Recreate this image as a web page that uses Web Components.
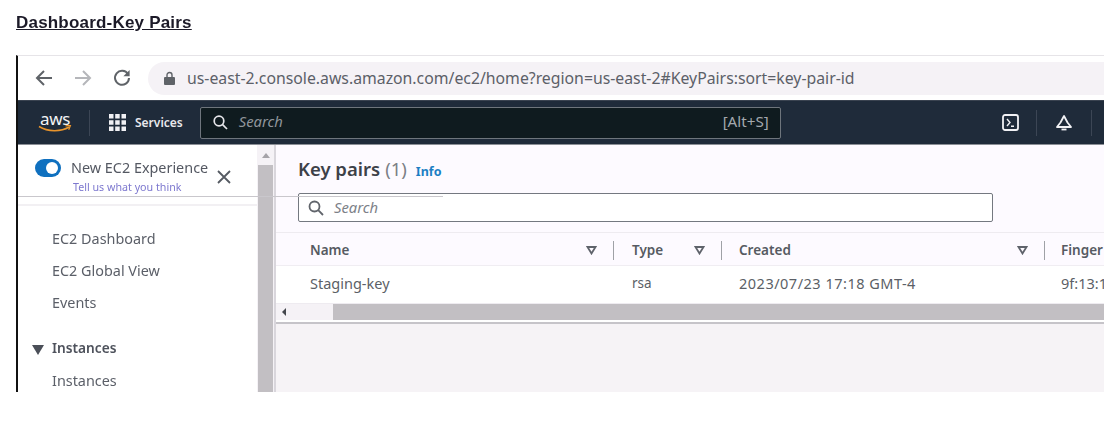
<!DOCTYPE html>
<html>
<head>
<meta charset="utf-8">
<title>Dashboard-Key Pairs</title>
<style>
  html, body { margin: 0; padding: 0; background: #fff; }
  body { width: 1104px; height: 441px; overflow: hidden; font-family: "Noto Sans", sans-serif; color: #414750; }
  .frame { display: flex; flex-direction: column; width: 1088px; height: 337px; margin-left: 16px; border-left: 2px solid #111; border-top: 1px solid #e6e4e8; box-sizing: border-box; overflow: hidden; filter: blur(.35px); }
  .console { display: flex; flex: 1; min-height: 0; position: relative; }
</style>
</head>
<body>
<page-title>Dashboard-Key Pairs</page-title>
<div class="frame">
  <browser-bar url="us-east-2.console.aws.amazon.com/ec2/home?region=us-east-2#KeyPairs:sort=key-pair-id"></browser-bar>
  <aws-nav></aws-nav>
  <div class="console">
    <ec2-sidebar></ec2-sidebar>
    <v-scroll></v-scroll>
    <keypairs-panel></keypairs-panel>
    <hair-line></hair-line>
  </div>
</div>
<script>
customElements.define('page-title', class extends HTMLElement {
  connectedCallback() {
    this.attachShadow({ mode: 'open' });
    this.shadowRoot.innerHTML = `
      <style>
        :host { display:block; height:55px; box-sizing:border-box; padding:13px 0 0 16px }
        h1 { margin:0; font:700 17px/20px "Liberation Sans", Arial, sans-serif; color:#1c1a28; text-decoration:underline; letter-spacing:.2px; filter:blur(.35px) }
      </style>
      <h1><slot></slot></h1>`;
  }
});

customElements.define('browser-bar', class extends HTMLElement {
  connectedCallback() {
    this.attachShadow({ mode: 'open' });
    const url = this.getAttribute('url');
    this.shadowRoot.innerHTML = `
      <style>
        :host { display:flex; align-items:center; height:45px; box-sizing:border-box; padding:0 0 0 17px; background:#fff; border-bottom:1px solid #3a4350; }
        svg { display:block; flex:none }
        .btn { margin-right:21px }
        .pill { flex:1; height:33px; margin-left:17px; display:flex; align-items:center; gap:12px; padding-left:16px; background:#f5f2f6; border-radius:17px 0 0 17px; color:#5c6068; font-size:15.8px; white-space:nowrap; }
      </style>
      <svg class="btn" width="18" height="18" viewBox="0 0 18 18" fill="none" stroke="#5f6368" stroke-width="2"><path d="M17 9H2M9 2 2 9l7 7"/></svg>
      <svg class="btn" width="18" height="18" viewBox="0 0 18 18" fill="none" stroke="#b5b6ba" stroke-width="2"><path d="M1 9h15M9 2l7 7-7 7"/></svg>
      <svg width="18" height="18" viewBox="0 0 18 18" fill="none" stroke="#5f6368" stroke-width="2"><path d="M15 5.200A7 7 0 1 0 16 9"/><path d="M16.600 1v6.200h-6.200z" fill="#5f6368" stroke="none"/></svg>
      <div class="pill">
        <svg width="11" height="14" viewBox="0 0 11 14"><path d="M1 6h9a1 1 0 0 1 1 1v6a1 1 0 0 1-1 1H1a1 1 0 0 1-1-1V7a1 1 0 0 1 1-1z" fill="#5f6368"/><path d="M3 6.500V4a2.500 2.500 0 0 1 5 0v2.500" fill="none" stroke="#5f6368" stroke-width="1.400"/></svg>
        <span>${url}</span>
      </div>`;
  }
});

customElements.define('aws-nav', class extends HTMLElement {
  connectedCallback() {
    this.attachShadow({ mode: 'open' });
    this.shadowRoot.innerHTML = `
      <style>
        :host { display:flex; align-items:center; height:44px; box-sizing:border-box; background:#1f2b3a; color:#e8e8ec; border-bottom:1px solid #8b8f96; padding-left:20px; }
        svg { display:block; flex:none }
        .logo { width:34px; margin-right:17px }
        .logo b { display:block; font:400 17px/13px "Noto Sans", sans-serif; letter-spacing:-.3px; color:#f3f3f5; text-align:center }
        .sep { width:1px; height:26px; background:#3c4655; flex:none }
        .services { margin:0 17px 0 9px; font-size:12px; font-weight:600 }
        .grid { margin-left:19px }
        .search { width:581px; height:32px; box-sizing:border-box; display:flex; align-items:center; background:#0f1b1f; border:1px solid #6e757c; border-radius:2px; padding:0 11px 0 12px; color:#8f959b; font-size:14.800px }
        .search i { margin:-4px 0 0 11px; flex:1 }
        .search span { margin-top:-4px; font-size:15.200px; color:#a3a8ad }
        .term { margin-left:221px }
      </style>
      <div class="logo">
        <b>aws</b>
        <svg width="34" height="8" viewBox="0 0 34 8" fill="none"><path d="M1 1.500c9 5.500 22 5.500 30 .5" stroke="#e8942c" stroke-width="1.600"/><path d="M27.500 .8l5-.5-1.800 4.400" stroke="#e8942c" stroke-width="1.300"/></svg>
      </div>
      <div class="sep"></div>
      <svg class="grid" width="17" height="17" viewBox="0 0 17 17" fill="#f1f1f4"><path d="M0 0h4.500v4.500H0zM6.200 0h4.500v4.500H6.200zM12.500 0H17v4.500h-4.500zM0 6.200h4.500v4.500H0zM6.200 6.200h4.500v4.500H6.200zM12.500 6.200H17v4.500h-4.500zM0 12.500h4.500V17H0zM6.200 12.500h4.500V17H6.200zM12.500 12.500H17V17h-4.500z"/></svg>
      <span class="services">Services</span>
      <div class="search">
        <svg width="15" height="15" viewBox="0 0 15 15" fill="none" stroke="#e6e6ea" stroke-width="1.700"><circle cx="6" cy="6" r="4.800"/><path d="M9.600 9.600 14 14"/></svg>
        <i>Search</i><span>[Alt+S]</span>
      </div>
      <svg class="term" width="17" height="17" viewBox="0 0 17 17" fill="none" stroke="#f1f1f4"><rect x="1" y="1" width="15" height="15" rx="2" stroke-width="1.800"/><path d="M5 5l3 3.500-3 3.500M9 12.300h3" stroke-width="1.400"/></svg>
      <div class="sep" style="margin-left:17px"></div>
      <svg style="margin-left:18px" width="18" height="18" viewBox="0 0 18 18" fill="#1f2b3a" stroke="#f1f1f4" stroke-width="1.800"><path d="M9 2 5.500 8.500 2 13h14l-3.500-4.500z" stroke-linejoin="round"/><path d="M6.500 15.500h5"/></svg>
      <div class="sep" style="margin-left:18px"></div>`;
  }
});

customElements.define('ec2-sidebar', class extends HTMLElement {
  connectedCallback() {
    this.attachShadow({ mode: 'open' });
    this.shadowRoot.innerHTML = `
      <style>
        :host { display:block; width:239px; flex:none; background:#fff; color:#5b5f68; overflow:hidden }
        .promo { position:relative; height:61px; box-sizing:border-box; padding:14px 0 0 17px; border-bottom:2px solid #f2f0f3 }
        .line { display:flex; align-items:center; gap:10px; font-size:14.400px; line-height:18px; color:#545862 }
        .toggle { width:26px; height:18px; border-radius:9px; background:#0f70bf; position:relative; flex:none }
        .toggle::after { content:""; position:absolute; right:3px; top:3px; width:12px; height:12px; border-radius:50%; background:#fff }
        .sub { margin:3px 0 0 38px; font-size:10.700px; line-height:14px; color:#7d78cf }
        .x { position:absolute; left:199px; top:25px }
        ul { list-style:none; margin:0; padding:17px 0 0 34px; font-size:14.400px }
        li { height:32px; line-height:32px }
        li.head { margin-top:12px; height:34px; line-height:33px; font-size:13.700px; font-weight:600; position:relative; color:#4e525c }
        li.head svg { position:absolute; left:-20px; top:14px }
      </style>
      <div class="promo">
        <div class="line"><span class="toggle"></span><span>New EC2 Experience</span></div>
        <div class="sub">Tell us what you think</div>
        <svg class="x" width="14" height="14" viewBox="0 0 14 14" stroke="#555a62" stroke-width="1.800"><path d="M1 1l12 12M13 1 1 13"/></svg>
      </div>
      <ul>
        <li>EC2 Dashboard</li>
        <li>EC2 Global View</li>
        <li>Events</li>
        <li class="head"><svg width="12" height="10" viewBox="0 0 12 10" fill="#4b4f58"><path d="M0 0h12L6 10z"/></svg>Instances</li>
        <li>Instances</li>
      </ul>`;
  }
});

customElements.define('v-scroll', class extends HTMLElement {
  connectedCallback() {
    this.attachShadow({ mode: 'open' });
    this.shadowRoot.innerHTML = `
      <style>
        :host { display:flex; flex-direction:column; align-items:center; width:19px; flex:none; box-sizing:border-box; background:#f5f2f6; border-right:2px solid #d9d6dc }
        .up { width:0; height:0; margin-top:8px; border:4px solid transparent; border-top:0; border-bottom:5px solid #a5a3a8 }
        .thumb { flex:1; width:15px; margin-top:7px; background:#c2bfc3 }
      </style>
      <div class="up"></div>
      <div class="thumb"></div>`;
  }
});

customElements.define('hair-line', class extends HTMLElement {
  connectedCallback() {
    this.attachShadow({ mode: 'open' });
    this.shadowRoot.innerHTML = `<style>:host { position:absolute; left:0; top:51px; width:425px; height:1px; background:#c9c7cc }</style>`;
  }
});

customElements.define('filter-mark', class extends HTMLElement {
  connectedCallback() {
    this.attachShadow({ mode: 'open' });
    this.shadowRoot.innerHTML = `
      <style>:host { display:block; line-height:0 }</style>
      <svg width="11" height="9" viewBox="0 0 11 9" fill="none" stroke="#5f636b" stroke-width="1.800"><path d="M1.500 1h8L5.500 7.500z"/></svg>`;
  }
});

customElements.define('keypairs-panel', class extends HTMLElement {
  connectedCallback() {
    this.attachShadow({ mode: 'open' });
    this.shadowRoot.innerHTML = `
      <style>
        :host { display:flex; flex-direction:column; flex:1; min-width:0; background:#f6f3f6; overflow:hidden }
        .top { height:88px; box-sizing:border-box; padding:12px 0 0 22px; background:#fdfaff; border-bottom:1px solid #eeebf0 }
        h2 { margin:0; display:flex; align-items:baseline; height:23px; font-size:18.500px; line-height:23px; font-weight:600; color:#3d4148 }
        h2 span { font-weight:400; color:#7b7f86; margin-left:5px }
        h2 a { font-size:12.500px; font-weight:700; color:#1b7fc4; margin-left:9px }
        .search { width:695px; height:29px; margin-top:13px; box-sizing:border-box; display:flex; align-items:center; gap:10px; padding-left:9px; background:#fff; border:1px solid #747880; border-radius:2px; font-size:14.800px; font-style:italic; color:#7d8188 }
        .search span { margin-top:-2px }
        .head, .row { display:grid; grid-template-columns:338px 108px 323px 1fr; }
        .head { height:33px; background:#fdfaff; border-bottom:1px solid #f0edf2; font-size:13.500px; font-weight:600; color:#565a62; align-items:center; padding-top:2px; box-sizing:border-box }
        .head > div { display:flex; align-items:center; justify-content:space-between; height:19px; box-sizing:border-box; padding:0 16px 0 17px; border-right:1px solid #9fa1a6; white-space:nowrap }
        .head > div:first-child { padding-left:34px }
        .head > div:nth-child(2) { padding-left:18px }
        .head > div:last-child { border:0; padding-left:16px; padding-right:0; overflow:hidden }
        .row { height:38px; padding-bottom:3px; background:#fff; font-size:14.500px; color:#5b5f66; align-items:center; box-sizing:border-box; border-bottom:1px solid #eeebf0 }
        .row > div { padding-left:17px; white-space:nowrap; overflow:hidden }
        .row > div:first-child { padding-left:34px }
        .row > div:nth-child(2) { padding-left:18px; font-size:13.500px }
        .row > div:nth-child(3) { letter-spacing:.5px }
        .row > div:last-child { padding-left:16px }
        .hbar { display:flex; align-items:center; height:16px; background:#f5f2f6; border-bottom:2px solid #fff }
        .hbar i { width:0; height:0; margin-left:6px; border:4px solid transparent; border-left:0; border-right:4px solid #44474d }
        .hbar b { margin-left:47px; flex:1; height:16px; background:#c2bfc3 }
        .rule { height:2px; background:#c6c4c9 }
      </style>
      <div class="top">
        <h2>Key pairs<span>(1)</span><a>Info</a></h2>
        <div class="search">
          <svg width="16" height="16" viewBox="0 0 16 16" fill="none" stroke="#60646b" stroke-width="1.800"><circle cx="6.500" cy="6.500" r="5"/><path d="M10.200 10.200 15 15"/></svg>
          <span>Search</span>
        </div>
      </div>
      <div class="head">
        <div><span>Name</span><filter-mark></filter-mark></div>
        <div><span>Type</span><filter-mark></filter-mark></div>
        <div><span>Created</span><filter-mark></filter-mark></div>
        <div><span>Finger</span></div>
      </div>
      <div class="row">
        <div>Staging-key</div>
        <div>rsa</div>
        <div>2023/07/23 17:18 GMT-4</div>
        <div>9f:13:1</div>
      </div>
      <div class="hbar"><i></i><b></b></div>
      <div class="rule"></div>`;
  }
});
</script>
</body>
</html>
